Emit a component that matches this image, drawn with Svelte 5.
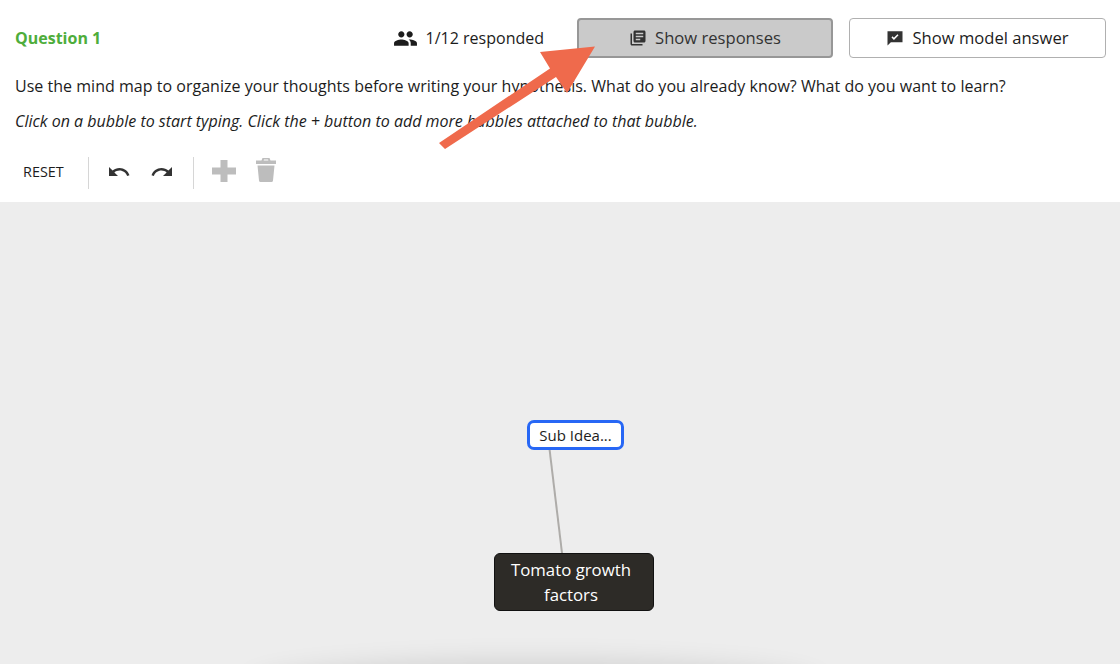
<script lang="ts">
  const paths = {
    people:
      "M16 11c1.66 0 2.99-1.34 2.99-3S17.66 5 16 5c-1.66 0-3 1.34-3 3s1.34 3 3 3zm-8 0c1.66 0 2.99-1.34 2.99-3S9.66 5 8 5C6.34 5 5 6.34 5 8s1.34 3 3 3zm0 2c-2.33 0-7 1.17-7 3.5V19h14v-2.5c0-2.33-4.67-3.5-7-3.5zm8 0c-.29 0-.62.02-.97.05 1.16.84 1.97 1.97 1.97 3.45V19h6v-2.5c0-2.33-4.67-3.5-7-3.5z",
    books:
      "M4 6H2v14c0 1.1.9 2 2 2h14v-2H4V6zm16-4H8c-1.1 0-2 .9-2 2v12c0 1.1.9 2 2 2h12c1.1 0 2-.9 2-2V4c0-1.1-.9-2-2-2zm-1 9H9V9h10v2zm-4 4H9v-2h6v2zm4-8H9V5h10v2z",
    undo: "M12.5 8c-2.65 0-5.05.99-6.9 2.6L2 7v9h9l-3.62-3.62c1.39-1.16 3.16-1.88 5.12-1.88 3.54 0 6.55 2.31 7.6 5.5l2.37-.78C21.08 11.03 17.15 8 12.5 8z",
    redo: "M18.4 10.6C16.55 8.99 14.15 8 11.5 8c-4.65 0-8.58 3.03-9.96 7.22L3.9 16c1.05-3.19 4.05-5.5 7.6-5.5 1.95 0 3.73.72 5.12 1.88L13 16h9V7l-3.6 3.6z",
  };
</script>

<div class="page">
  <header class="top">
    <span class="title">Question 1</span>
    <span class="responded">
      <svg class="people" viewBox="0 0 24 24"><path d={paths.people} /></svg>
      1/12 responded
    </span>
    <button class="btn active">
      <svg class="btn-icon" viewBox="0 0 24 24"><path d={paths.books} /></svg>
      Show responses
    </button>
    <button class="btn">
      <svg class="btn-icon" viewBox="0 0 24 24">
        <path d="M22 3H2v19l4.500-4.500H22z" />
        <path class="tick" d="M8 10.500l2.600 2.600 5.400-5.400" />
      </svg>
      Show model answer
    </button>
  </header>

  <p class="prompt">Use the mind map to organize your thoughts before writing your hypothesis. What do you already know? What do you want to learn?</p>
  <p class="hint">Click on a bubble to start typing. Click the + button to add more bubbles attached to that bubble.</p>

  <div class="toolbar">
    <span class="reset">RESET</span>
    <span class="sep"></span>
    <svg class="tool first" viewBox="0 0 24 24"><path d={paths.undo} /></svg>
    <svg class="tool" viewBox="0 0 24 24"><path d={paths.redo} /></svg>
    <span class="sep second"></span>
    <svg class="plus" viewBox="0 0 24 22"><path d="M8.500 0h7v7.500H24v7h-8.500V22h-7v-7.500H0v-7h8.500z" /></svg>
    <svg class="trash" viewBox="0 0 20 24"><path d="M6.500 0h7l1 2.500H20v3.500H0V2.500h5.500zM8 1.500l-.4 1h4.800l-.4-1zM1.500 7.500h17L17 22.500q-.1 1.500-1.600 1.500H4.600q-1.500 0-1.600-1.500z" fill-rule="evenodd" /></svg>
  </div>

  <div class="canvas">
    <svg class="link" width="1120" height="462"><line x1="549.500" y1="247" x2="562" y2="351" /></svg>
    <div class="node sub">Sub Idea...</div>
    <div class="node root">Tomato growth<br />factors</div>
    <div class="shadow"></div>
  </div>

  <svg class="arrow" width="1120" height="200">
    <polygon points="595,46.500 540,52 550,68.500 439,143 445,149 556,77 567,93" />
  </svg>
</div>

<style>
  :global(body) {
    margin: 0;
    background: #fff;
  }

  .page {
    position: relative;
    width: 1120px;
    height: 664px;
    overflow: hidden;
    display: flex;
    flex-direction: column;
    font-family: "Open Sans", sans-serif;
    color: #1c1c1c;
    font-size: 16px;
  }

  .top {
    display: flex;
    align-items: center;
    height: 40px;
    padding: 18px 14px 0 15px;
  }

  .title {
    color: #4ead3b;
    font-weight: 700;
    flex: 1;
  }

  .responded {
    display: flex;
    align-items: center;
    gap: 8px;
    margin-right: 33px;
    white-space: nowrap;
  }

  .people {
    width: 25px;
    height: 25px;
    fill: #1c1c1c;
  }

  .btn {
    display: flex;
    align-items: center;
    justify-content: center;
    gap: 8px;
    width: 257px;
    height: 40px;
    box-sizing: border-box;
    margin-left: 16px;
    padding: 0 0 1px;
    background: #fff;
    border: 1px solid #b0b0b0;
    border-radius: 4px;
    font: inherit;
    font-size: 16.600px;
    color: #1c1c1c;
  }

  .btn.active {
    width: 256px;
    margin-left: 0;
    background: #cacaca;
    border: 2px solid #979797;
    color: #333;
  }

  .btn-icon {
    width: 18px;
    height: 18px;
    fill: #333;
  }

  .tick {
    fill: none;
    stroke: #fff;
    stroke-width: 2;
  }

  .prompt,
  .hint {
    margin: 0;
    padding-left: 15px;
    white-space: nowrap;
    line-height: 22px;
  }

  .prompt {
    margin-top: 17px;
    letter-spacing: 0.023px;
  }

  .hint {
    margin-top: 13px;
    font-style: italic;
  }

  .toolbar {
    display: flex;
    align-items: center;
    height: 32px;
    margin-top: 24px;
    padding-left: 23px;
    flex: none;
  }

  .reset {
    font-size: 14.400px;
    width: 65px;
    margin-bottom: 2px;
  }

  .sep {
    width: 1px;
    height: 32px;
    margin-top: 2px;
    background: #d6d6d6;
  }

  .sep.second {
    margin-left: 19px;
  }

  .tool {
    width: 24px;
    height: 24px;
    fill: #333;
    margin-left: 19px;
  }

  .tool.first {
    margin-left: 18px;
  }

  .plus {
    width: 24px;
    height: 22px;
    fill: #bdbdbd;
    margin-left: 18px;
    margin-top: -2px;
  }

  .trash {
    width: 20px;
    height: 24px;
    fill: #bdbdbd;
    margin-left: 20px;
    margin-top: -4px;
  }

  .canvas {
    position: relative;
    flex: 1;
    margin-top: 14px;
    background: #ededed;
    overflow: hidden;
  }

  .link {
    position: absolute;
    left: 0;
    top: 0;
  }

  .link line {
    stroke: #aeaca9;
    stroke-width: 2;
  }

  .node {
    position: absolute;
    box-sizing: border-box;
    text-align: center;
  }

  .sub {
    left: 527px;
    top: 218px;
    width: 97px;
    height: 30px;
    border: 3px solid #2767f5;
    border-radius: 7px;
    background: #fff;
    font-size: 15px;
    line-height: 24px;
    color: #1c1c1c;
  }

  .root {
    left: 494px;
    top: 351px;
    width: 160px;
    height: 58px;
    border: 1px solid #111;
    border-radius: 6px;
    background: #2d2b27;
    color: #fff;
    font-size: 16.800px;
    line-height: 25px;
    padding-top: 3px;
    padding-right: 6px;
  }

  .shadow {
    position: absolute;
    left: 255px;
    width: 560px;
    top: 470px;
    height: 40px;
    border-radius: 50%;
    box-shadow: 0 0 30px 6px rgba(0, 0, 0, 0.16);
  }

  .arrow {
    position: absolute;
    left: 0;
    top: 0;
    pointer-events: none;
  }

  .arrow polygon {
    fill: #ef6a4c;
  }
</style>
